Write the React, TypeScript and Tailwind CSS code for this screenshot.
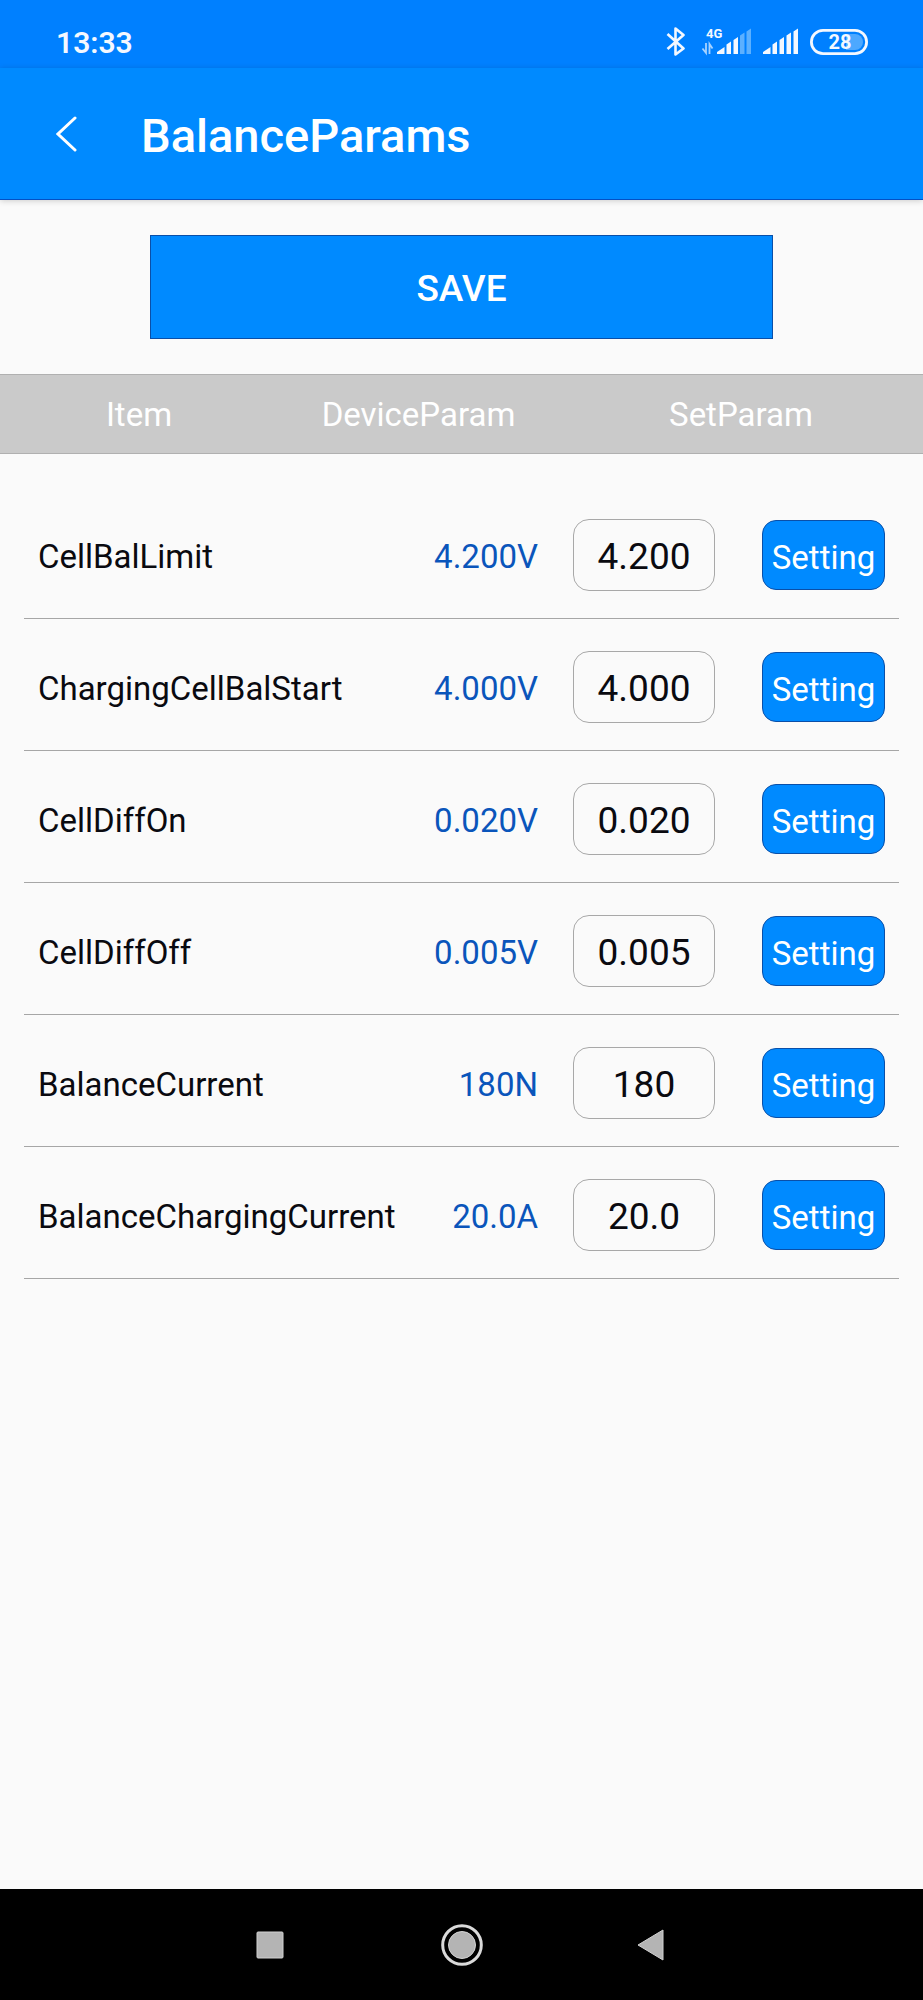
import { useState } from "react";

interface Param {
  name: string;
  device: string;
  value: string;
}

const PARAMS: Param[] = [
  { name: "CellBalLimit", device: "4.200V", value: "4.200" },
  { name: "ChargingCellBalStart", device: "4.000V", value: "4.000" },
  { name: "CellDiffOn", device: "0.020V", value: "0.020" },
  { name: "CellDiffOff", device: "0.005V", value: "0.005" },
  { name: "BalanceCurrent", device: "180N", value: "180" },
  { name: "BalanceChargingCurrent", device: "20.0A", value: "20.0" },
];

const BluetoothIcon = () => (
  <svg width="20" height="32" viewBox="0 0 20 32" fill="none" stroke="#f4f8ff" strokeWidth="2.6">
    <path d="M2.500 8 18.500 22.500 10.500 28.500V2.500l8 6.500L2.500 23" strokeLinejoin="round" />
  </svg>
);

const MobileDataIcon = () => (
  <svg width="51" height="32" viewBox="0 0 51 32" fill="#f4f8ff">
    <text x="5" y="12" fontFamily="Roboto, sans-serif" fontSize="13" fontWeight="700">
      4G
    </text>
    <g stroke="#a6d2ff" strokeWidth="1.8" fill="none">
      <path d="M5 17v10L1.500 22.500M8.500 28V18l3 4.500" />
    </g>
    <path d="M16 28v-2l7.500-5v7zM25.500 28v-9.500l4.500-3v12.500zM32.500 28v-14l4.500-3v17z" />
    <path d="M39 28v-18.500l4.500-3v21.500zM45.500 28v-22.500l4.500-3v25.500z" fill="#5cb0ff" />
  </svg>
);

const SignalIcon = () => (
  <svg width="36" height="32" viewBox="0 0 36 32" fill="#f4f8ff">
    <path d="M0 28v-2l7.500-5v7zM9.500 28v-9.500l4.500-3v12.500zM16.500 28v-14l4.500-3v17zM23.500 28v-18.500l4.500-3v21.500zM30.500 28v-22.500l4.500-3v25.500z" />
  </svg>
);

const BatteryIcon = () => (
  <svg width="58" height="26" viewBox="0 0 58 26">
    <rect x="1.400" y="1.400" width="55.200" height="23.200" rx="11.600" fill="none" stroke="#f4f8ff" strokeWidth="2.800" />
    <path d="M36 5h9a8 8 0 0 1 0 16h-9z" fill="#4da8ff" />
    <text
      x="30"
      y="20"
      textAnchor="middle"
      fontFamily="Roboto, sans-serif"
      fontSize="20"
      fontWeight="700"
      fill="#f4f8ff"
    >
      28
    </text>
  </svg>
);

const StatusBar = () => (
  <div className="flex h-[68px] items-center justify-between bg-[#0080ff] pt-4 pr-[55px] pl-14">
    <span className="pt-px text-[30px] leading-9 font-semibold text-[#f4f8ff]">13:33</span>
    <div className="flex items-center gap-4">
      <BluetoothIcon />
      <div className="flex items-center gap-[11px]">
        <MobileDataIcon />
        <SignalIcon />
        <BatteryIcon />
      </div>
    </div>
  </div>
);

const TitleBar = () => (
  <header className="flex h-[132px] items-center border-b border-[#0450c4] bg-[#008aff] pl-14 shadow-[0_1px_6px_rgba(0,0,0,0.18)]">
    <button type="button" aria-label="Back" className="flex w-[85px] cursor-pointer">
      <svg width="22" height="36" viewBox="0 0 22 36" fill="none" stroke="#fff" strokeWidth="3">
        <path d="M19 2 2 18l17 16" strokeLinecap="round" />
      </svg>
    </button>
    <h1 className="pt-1 text-[47px] leading-[56px] font-medium text-white">BalanceParams</h1>
  </header>
);

const ParamRow = ({ param }: { param: Param }) => {
  const [value, setValue] = useState(param.value);

  return (
    <tr className="flex h-[132px] items-center border-b border-[#a6a6a6] pt-1 pr-[14px] pl-[14px]">
      <th scope="row" className="flex-1 pt-1 text-left text-[33px] leading-10 font-normal text-[#0a0a10]">
        <label htmlFor={param.name}>{param.name}</label>
      </th>
      <td className="pt-1 text-[33px] leading-10 text-[#0a55bb]">{param.device}</td>
      <td className="pl-[35px]">
        <input
          id={param.name}
          value={value}
          onChange={(e) => setValue(e.target.value)}
          className="block h-[72px] w-[142px] rounded-2xl border border-[#a8a8a8] bg-transparent pt-1 text-center text-[37px] text-[#0a0a10] outline-none"
        />
      </td>
      <td className="pl-[47px]">
        <button
          type="button"
          className="block h-[70px] w-[123px] cursor-pointer rounded-[14px] border border-[#0a4fa8] bg-[#008aff] pt-1.5 text-[33px] leading-10 text-white"
        >
          Setting
        </button>
      </td>
    </tr>
  );
};

const NavBar = () => (
  <nav className="flex h-[111px] items-center justify-center bg-black">
    <button type="button" aria-label="Recent apps" className="flex w-48 cursor-pointer justify-center">
      <svg width="28" height="28" viewBox="0 0 28 28">
        <rect x="1" y="1" width="26" height="26" rx="1" fill="#b4b4b4" stroke="#d0d0d0" />
      </svg>
    </button>
    <button type="button" aria-label="Home" className="flex w-48 cursor-pointer justify-center">
      <svg width="42" height="42" viewBox="0 0 42 42">
        <circle cx="21" cy="21" r="19.300" fill="none" stroke="#dadada" strokeWidth="3" />
        <circle cx="21" cy="21" r="13.500" fill="#b4b4b4" stroke="#d4d4d4" />
      </svg>
    </button>
    <button type="button" aria-label="Back" className="flex w-48 cursor-pointer justify-center">
      <svg width="34" height="32" viewBox="0 0 34 32">
        <path d="M1 16 26 1v30z" fill="#b4b4b4" stroke="#d0d0d0" strokeLinejoin="round" />
      </svg>
    </button>
  </nav>
);

const App = () => {
  return (
    <div className="flex min-h-screen flex-col bg-[#fafafa] font-[Roboto,sans-serif]">
      <StatusBar />
      <TitleBar />
      <main className="flex-1">
        <div className="px-[150px] py-[35px]">
          <button
            type="button"
            className="block h-[104px] w-full cursor-pointer border border-[#0a4fa8] bg-[#008aff] pt-1 text-[37px] font-medium text-white"
          >
            SAVE
          </button>
        </div>
        <table className="block">
          <thead className="block">
            <tr className="grid h-20 grid-cols-[278fr_281fr_364fr] items-center border-y border-[#b0b0b0] bg-[#cacaca] pt-0.5 text-[33px] leading-10 text-white">
              <th className="font-normal">Item</th>
              <th className="font-normal">DeviceParam</th>
              <th className="font-normal">SetParam</th>
            </tr>
          </thead>
          <tbody className="mx-6 block pt-[33px]">
            {PARAMS.map((param) => (
              <ParamRow key={param.name} param={param} />
            ))}
          </tbody>
        </table>
      </main>
      <NavBar />
    </div>
  );
};

export default App;
